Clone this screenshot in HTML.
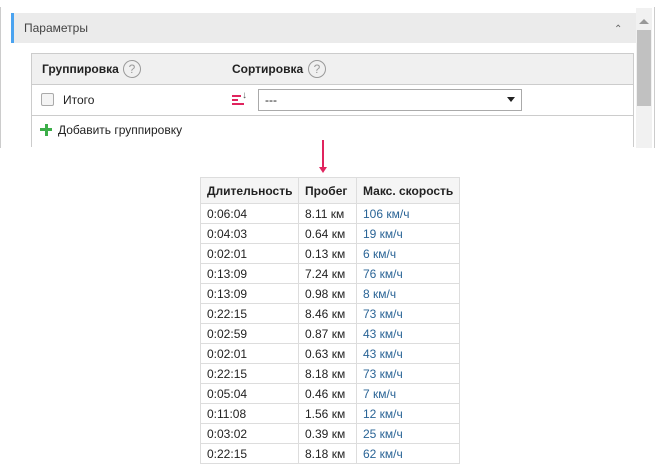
<!DOCTYPE html><html><head><meta charset="utf-8"><style>
body{margin:0;width:660px;height:466px;background:#fff;font-family:"Liberation Sans",sans-serif;font-size:12px;color:#222;position:relative;overflow:hidden}
.abs{position:absolute}
table{border-collapse:collapse;position:absolute;left:200px;top:177px}
td,th{border:1px solid #ddd;height:19px;padding:0 0 0 6px;text-align:left;font-size:12px}
th{height:25px;background:#f5f5f5;font-weight:bold;color:#222}
td.b{color:#2a6496}
</style></head><body>
<div class="abs" style="left:0;top:7px;width:653px;height:141px;border-left:1px solid #ccc;border-right:1px solid #ccc"></div>
<div class="abs" style="left:11px;top:13px;width:623px;height:30px;background:#ebebeb;border-left:3px solid #4aa3f0"></div>
<div class="abs" style="left:24px;top:21px;font-size:12px;color:#444">Параметры</div>
<div class="abs" style="left:614px;top:24px;font-size:10px;color:#666">&#8963;</div>
<div class="abs" style="left:636px;top:8px;width:16px;height:140px;background:#f1f1f1"></div>
<div class="abs" style="left:637px;top:30px;width:14px;height:76px;background:#c1c1c1"></div>
<div class="abs" style="left:639px;top:19px;width:0;height:0;border-left:5px solid transparent;border-right:5px solid transparent;border-bottom:5px solid #999"></div>
<div class="abs" style="left:31px;top:53px;width:601px;height:93px;border:1px solid #ccc;border-bottom:none"></div>
<div class="abs" style="left:32px;top:54px;width:601px;height:30px;background:#f0f0f0;border-bottom:1px solid #ccc"></div>
<div class="abs" style="left:42px;top:62px;font-weight:bold;font-size:12px">Группировка</div>
<div class="abs" style="left:123px;top:60px;width:16px;height:16px;border:1px solid #999;border-radius:50%;text-align:center;line-height:16px;color:#999;font-size:12px">?</div>
<div class="abs" style="left:232px;top:62px;font-weight:bold;font-size:12px">Сортировка</div>
<div class="abs" style="left:308px;top:60px;width:16px;height:16px;border:1px solid #999;border-radius:50%;text-align:center;line-height:16px;color:#999;font-size:12px">?</div>
<div class="abs" style="left:32px;top:115px;width:601px;border-top:1px solid #ccc"></div>
<div class="abs" style="left:41px;top:93px;width:11px;height:11px;border:1px solid #aaa;border-radius:2px;background:#f4f4f4"></div>
<div class="abs" style="left:63px;top:93px">Итого</div>
<div class="abs" style="left:232px;top:95px;width:9px;height:2px;background:#e0245e"></div>
<div class="abs" style="left:232px;top:99px;width:6px;height:2px;background:#e0245e"></div>
<div class="abs" style="left:232px;top:103px;width:12px;height:2px;background:#e0245e"></div>
<div class="abs" style="left:242px;top:90px;font-size:10px;color:#555">&#8595;</div>
<div class="abs" style="left:258px;top:89px;width:262px;height:20px;border:1px solid #aaa;background:#fff"></div>
<div class="abs" style="left:265px;top:93px">---</div>
<div class="abs" style="left:507px;top:97px;width:0;height:0;border-left:4px solid transparent;border-right:4px solid transparent;border-top:5px solid #222"></div>
<div class="abs" style="left:40px;top:128px;width:12px;height:3px;background:#3cae49"></div>
<div class="abs" style="left:44.5px;top:123.5px;width:3px;height:12px;background:#3cae49"></div>
<div class="abs" style="left:58px;top:123px">Добавить группировку</div>
<div class="abs" style="left:322px;top:140px;width:2px;height:28px;background:#e0245e"></div>
<div class="abs" style="left:319px;top:167px;width:0;height:0;border-left:4px solid transparent;border-right:4px solid transparent;border-top:6px solid #e0245e"></div>
<table>
<tr><th style="width:91px">Длительность</th><th style="width:51px">Пробег</th><th style="width:96px">Макс. скорость</th></tr>
<tr><td>0:06:04</td><td>8.11 км</td><td class="b">106 км/ч</td></tr>
<tr><td>0:04:03</td><td>0.64 км</td><td class="b">19 км/ч</td></tr>
<tr><td>0:02:01</td><td>0.13 км</td><td class="b">6 км/ч</td></tr>
<tr><td>0:13:09</td><td>7.24 км</td><td class="b">76 км/ч</td></tr>
<tr><td>0:13:09</td><td>0.98 км</td><td class="b">8 км/ч</td></tr>
<tr><td>0:22:15</td><td>8.46 км</td><td class="b">73 км/ч</td></tr>
<tr><td>0:02:59</td><td>0.87 км</td><td class="b">43 км/ч</td></tr>
<tr><td>0:02:01</td><td>0.63 км</td><td class="b">43 км/ч</td></tr>
<tr><td>0:22:15</td><td>8.18 км</td><td class="b">73 км/ч</td></tr>
<tr><td>0:05:04</td><td>0.46 км</td><td class="b">7 км/ч</td></tr>
<tr><td>0:11:08</td><td>1.56 км</td><td class="b">12 км/ч</td></tr>
<tr><td>0:03:02</td><td>0.39 км</td><td class="b">25 км/ч</td></tr>
<tr><td>0:22:15</td><td>8.18 км</td><td class="b">62 км/ч</td></tr>
</table>
</body></html>
